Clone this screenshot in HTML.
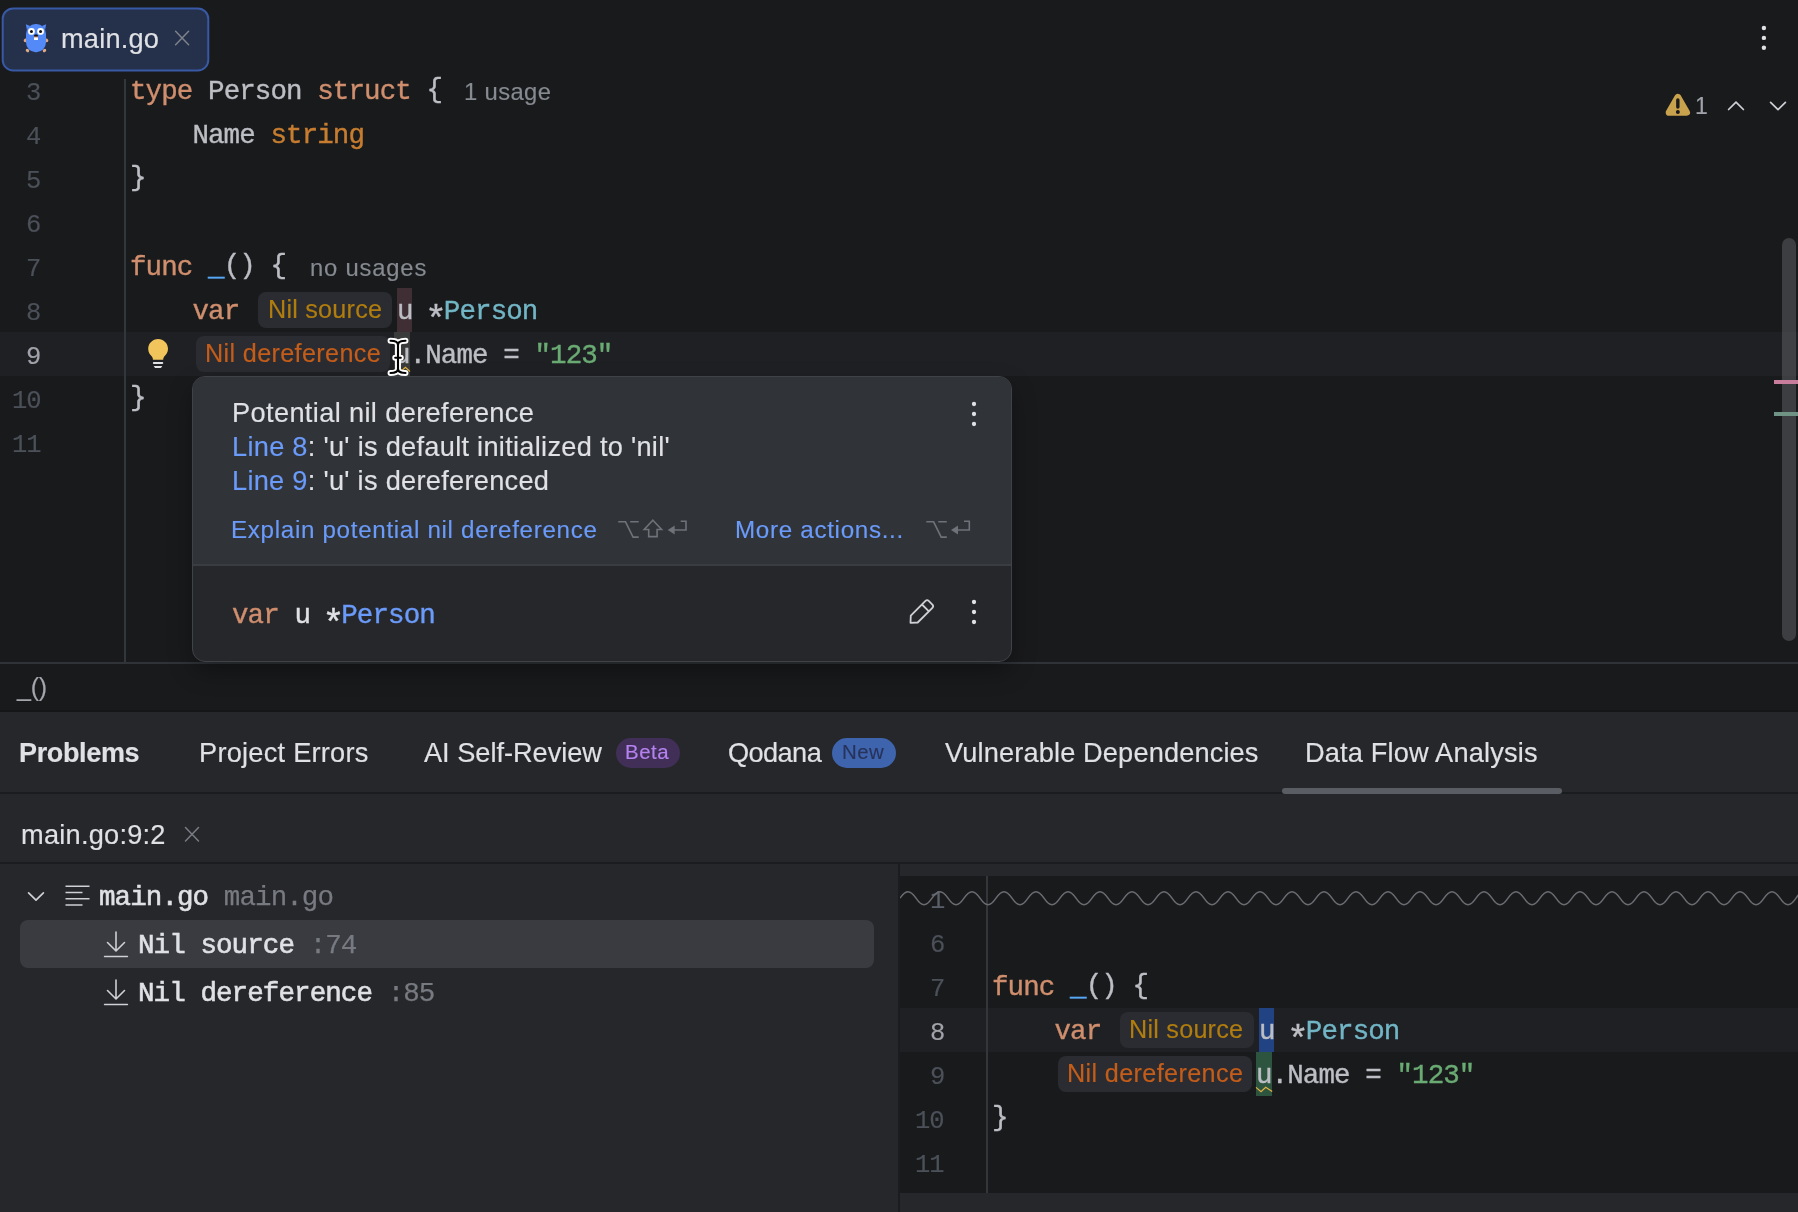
<!DOCTYPE html>
<html><head><meta charset="utf-8"><title>main.go</title>
<style>
*{box-sizing:border-box;margin:0;padding:0}
html,body{width:1798px;height:1212px;overflow:hidden;background:#191a1c}
body{position:relative;font-family:"Liberation Sans",sans-serif;color:#bcbec4}
.abs{position:absolute}
.ui{font-family:"Liberation Sans",sans-serif;white-space:pre;position:absolute;line-height:1;will-change:transform;-webkit-text-stroke:0.15px currentColor}
.mono{font-family:"Liberation Mono",monospace;white-space:pre;position:absolute;line-height:1;color:#bcbec4;-webkit-text-stroke:0.4px currentColor;will-change:transform}
.tree{-webkit-text-stroke:0.6px currentColor;color:#dfe1e5}
.kw{color:#cf8e6d}.ty{color:#c77d30}.tl{color:#72b6c6}.bl{color:#56a8f5}.st{color:#6aab73}.lk{color:#6b9bfa}.gr{color:#777a80;-webkit-text-stroke:0.25px currentColor}
.as{display:inline-block;width:21.900px;margin:0 -3.150px;letter-spacing:0;text-align:center;position:relative;top:12px;font-size:36.500px;line-height:0}
.br{position:relative;top:-2.400px}
.chip{position:absolute;background:#2a2c31;border-radius:8px}
</style></head><body>

<svg class="abs" style="left:0;top:0" width="216" height="80" viewBox="0 0 216 80"><rect x="2.700" y="8.400" width="205.600" height="62" rx="10.400" fill="#25304b" stroke="#3859a5" stroke-width="2"/></svg>
<svg class="abs" style="left:20px;top:20px" width="32" height="36" viewBox="20 20 32 36">
<path d="M25.900 24.300l4.200 1.800-3.300 3.300z" fill="#548af7"/><path d="M46.100 24.300l-4.200 1.800 3.300 3.300z" fill="#548af7"/>
<ellipse cx="25.800" cy="40.200" rx="2.300" ry="1.700" transform="rotate(-35 25.800 40.200)" fill="#e0aa84"/>
<ellipse cx="46.200" cy="40.200" rx="2.300" ry="1.700" transform="rotate(35 46.200 40.200)" fill="#e0aa84"/>
<ellipse cx="27.500" cy="50.500" rx="1.900" ry="1.500" transform="rotate(40 27.500 50.500)" fill="#e0aa84"/>
<ellipse cx="44.500" cy="50.500" rx="1.900" ry="1.500" transform="rotate(-40 44.500 50.500)" fill="#e0aa84"/>
<rect x="26" y="24" width="20" height="28.200" rx="9.500" ry="10" fill="#548af7"/>
<circle cx="31.450" cy="31.400" r="3.400" fill="#fff"/><circle cx="40.550" cy="31.400" r="3.400" fill="#fff"/>
<circle cx="31.450" cy="31.400" r="1.500" fill="#111"/><circle cx="40.550" cy="31.400" r="1.500" fill="#111"/>
<ellipse cx="36" cy="35.700" rx="2.100" ry="1.500" fill="#1a1210"/>
<rect x="34.100" y="36.600" width="3.800" height="1.400" fill="#e8b08a"/>
<rect x="34" y="37.700" width="4" height="2.300" fill="#fff"/>
</svg>
<svg class="abs" style="left:172px;top:28px" width="20" height="20" viewBox="172 28 20 20"><path d="M175.600 31.300l13 13.400M188.600 31.300l-13 13.400" stroke="#7e828a" stroke-width="1.500" stroke-linecap="round"/></svg>
<div class="abs" style="left:0;top:332px;width:1798px;height:44px;background:#1f2024"></div>
<div class="abs" style="left:124px;top:79px;width:2px;height:583px;background:#33363b"></div>
<div class="mono" style="right:1757.90px;top:80.67px;font-size:25.5px;letter-spacing:-1.000px;color:#4b5059;-webkit-text-stroke:0.15px currentColor">3</div>
<div class="mono" style="right:1757.90px;top:124.67px;font-size:25.5px;letter-spacing:-1.000px;color:#4b5059;-webkit-text-stroke:0.15px currentColor">4</div>
<div class="mono" style="right:1757.90px;top:168.67px;font-size:25.5px;letter-spacing:-1.000px;color:#4b5059;-webkit-text-stroke:0.15px currentColor">5</div>
<div class="mono" style="right:1757.90px;top:212.67px;font-size:25.5px;letter-spacing:-1.000px;color:#4b5059;-webkit-text-stroke:0.15px currentColor">6</div>
<div class="mono" style="right:1757.90px;top:256.67px;font-size:25.5px;letter-spacing:-1.000px;color:#4b5059;-webkit-text-stroke:0.15px currentColor">7</div>
<div class="mono" style="right:1757.90px;top:300.67px;font-size:25.5px;letter-spacing:-1.000px;color:#4b5059;-webkit-text-stroke:0.15px currentColor">8</div>
<div class="mono" style="right:1757.90px;top:344.67px;font-size:25.5px;letter-spacing:-1.000px;color:#a1a3ab;-webkit-text-stroke:0.15px currentColor">9</div>
<div class="mono" style="right:1757.90px;top:388.67px;font-size:25.5px;letter-spacing:-1.000px;color:#4b5059;-webkit-text-stroke:0.15px currentColor">10</div>
<div class="mono" style="right:1757.90px;top:432.67px;font-size:25.5px;letter-spacing:-1.000px;color:#4b5059;-webkit-text-stroke:0.15px currentColor">11</div>
<div class="mono" style="left:130.00px;top:78.15px;font-size:27.5px;letter-spacing:-0.900px;"><span class="kw">type</span> Person <span class="kw">struct</span> <span class="br">{</span></div>
<div class="mono" style="left:130.00px;top:122.15px;font-size:27.5px;letter-spacing:-0.900px;">    Name <span class="ty">string</span></div>
<div class="mono" style="left:130.00px;top:166.15px;font-size:27.5px;letter-spacing:-0.900px;"><span class="br">}</span></div>
<div class="mono" style="left:130.00px;top:254.15px;font-size:27.5px;letter-spacing:-0.900px;"><span class="kw">func</span> <span class="bl">_</span><span class="br">()</span> <span class="br">{</span></div>
<div class="mono" style="left:130.00px;top:298.15px;font-size:27.5px;letter-spacing:-0.900px;">    <span class="kw">var</span></div>
<div class="abs" style="left:397px;top:288px;width:15.300px;height:44px;background:#3f2e33"></div>
<div class="mono" style="left:397.00px;top:298.15px;font-size:27.5px;letter-spacing:-0.900px;">u <span class="as">*</span><span class="tl">Person</span></div>
<div class="abs" style="left:394px;top:332px;width:16px;height:44px;background:#393c3b"></div>
<div class="mono" style="left:394.00px;top:342.15px;font-size:27.5px;letter-spacing:-0.900px;">u.Name = <span class="st">"123"</span></div>
<div class="mono" style="left:130.00px;top:386.15px;font-size:27.5px;letter-spacing:-0.900px;"><span class="br">}</span></div>
<div class="chip" style="left:258px;top:292px;width:134px;height:36px"></div>
<div class="chip" style="left:196px;top:336px;width:194px;height:36px"></div>
<svg class="abs" style="left:390px;top:362px" width="24" height="14" viewBox="390 362 24 14"><path d="M400.700 371.800l4.700-4.500 4.600 4.200" fill="none" stroke="#e3b341" stroke-width="1.200"/></svg>
<svg class="abs" style="left:144px;top:336px" width="28" height="36" viewBox="144 336 28 36">
<path d="M158.100 338.900C152.600 338.900 148.200 343.300 148.200 348.800C148.200 352.300 150 354.600 151.400 356.100C152.400 357.200 152.900 358.200 152.900 359.800H163.200C163.200 358.200 163.700 357.200 164.700 356.100C166.100 354.600 168 352.300 168 348.800C168 343.300 163.600 338.900 158.100 338.900Z" fill="#f2c55c"/>
<rect x="152.900" y="362" width="10.300" height="2.100" rx="0.800" fill="#dfe1e5"/>
<path d="M153.700 366h8.600l-1.400 2h-5.800z" fill="#dfe1e5"/>
</svg>
<svg class="abs" style="left:1754px;top:22px" width="20" height="32" viewBox="1754 22 20 32"><circle cx="1763.900" cy="28" r="2.200" fill="#dfe1e5"/><circle cx="1763.900" cy="37.900" r="2.200" fill="#dfe1e5"/><circle cx="1763.900" cy="47.800" r="2.200" fill="#dfe1e5"/></svg>
<svg class="abs" style="left:1662px;top:90px" width="32" height="30" viewBox="1662 90 32 30">
<path d="M1677.850 97.300L1686.600 112.400H1669.100Z" fill="#c9a24e" stroke="#c9a24e" stroke-width="6.800" stroke-linejoin="round"/>
<rect x="1676.150" y="98.300" width="3.400" height="10.400" rx="1.700" fill="#191a1c"/><circle cx="1677.850" cy="112" r="2" fill="#191a1c"/></svg>
<svg class="abs" style="left:1724px;top:96px" width="24" height="20" viewBox="1724 96 24 20"><path d="M1728.600 109.500l7.400-7.400 7.400 7.400" fill="none" stroke="#ced0d6" stroke-width="1.700" stroke-linecap="round" stroke-linejoin="round"/></svg>
<svg class="abs" style="left:1766px;top:96px" width="24" height="20" viewBox="1766 96 24 20"><path d="M1770.600 102.300l7.400 7.400 7.400-7.400" fill="none" stroke="#ced0d6" stroke-width="1.700" stroke-linecap="round" stroke-linejoin="round"/></svg>
<div class="abs" style="left:1782px;top:238px;width:14px;height:403px;border-radius:7px;background:rgba(90,92,96,0.55)"></div>
<div class="abs" style="left:1774px;top:380px;width:24px;height:4px;background:#c97d9c"></div>
<div class="abs" style="left:1774px;top:412px;width:24px;height:4px;background:#6f9384"></div>
<div class="abs" style="left:0;top:662px;width:1798px;height:2px;background:#303338"></div>
<div class="abs" style="left:0;top:710px;width:1798px;height:2px;background:#151618"></div>
<div class="abs" style="left:192px;top:375.500px;width:820px;height:286px;border-radius:13px;background:#26272b;border:1.500px solid #3f4247;overflow:hidden;box-shadow:0 10px 24px -2px rgba(0,0,0,0.36)">
  <div class="abs" style="left:0;top:0;width:100%;height:187.500px;background:#303338"></div>
  <div class="abs" style="left:0;top:187.500px;width:100%;height:2px;background:#3a3d42"></div>
</div>
<svg class="abs" style="left:963px;top:396.0px" width="20" height="40" viewBox="963 396.0 20 40"><circle cx="974" cy="404.0" r="2.150" fill="#dfe1e5"/><circle cx="974" cy="414.0" r="2.150" fill="#dfe1e5"/><circle cx="974" cy="424.0" r="2.150" fill="#dfe1e5"/></svg>
<svg class="abs" style="left:963px;top:594.0px" width="20" height="40" viewBox="963 594.0 20 40"><circle cx="974" cy="602.0" r="2.150" fill="#dfe1e5"/><circle cx="974" cy="612.0" r="2.150" fill="#dfe1e5"/><circle cx="974" cy="622.0" r="2.150" fill="#dfe1e5"/></svg>
<svg class="abs" style="left:904px;top:594px" width="36" height="34" viewBox="904 594 36 34"><path d="M910.500 622.800l.3-7.200 14.700-14.700a2.300 2.300 0 0 1 3.200 0l3.700 3.700a2.300 2.300 0 0 1 0 3.200l-14.700 14.700zM922 604.500l6.900 6.900" fill="none" stroke="#ced0d6" stroke-width="1.800" stroke-linejoin="round" stroke-linecap="round"/></svg>
<svg class="abs" style="left:610px;top:512px" width="370" height="32" viewBox="610 512 370 32"><path d="M618.2 521.800h7.300l7.600 15.300h5.600M630.2 521.800h8.500" fill="none" stroke="#6f7278" stroke-width="1.600"/><path d="M652.9000000000001 520.200l8.700 9.300h-4.500v7.100h-8.400v-7.100h-4.500z" fill="none" stroke="#6f7278" stroke-width="1.600" stroke-linejoin="miter"/><path d="M686.0 521.300h-5.300M686.0 520.500v9.500h-12" fill="none" stroke="#6f7278" stroke-width="1.600"/><path d="M667.7 530l7-4.600v9.200z" fill="#6f7278"/><path d="M926.3 521.800h7.300l7.600 15.300h5.600M938.3 521.800h8.500" fill="none" stroke="#6f7278" stroke-width="1.600"/><path d="M969.3 521.300h-5.300M969.3 520.500v9.500h-12" fill="none" stroke="#6f7278" stroke-width="1.600"/><path d="M951.0 530l7-4.600v9.200z" fill="#6f7278"/></svg>
<div class="mono" style="left:232.00px;top:602.20px;font-size:27.5px;letter-spacing:-0.900px;color:#dfe1e5;"><span class="kw">var</span> u <span class="as">*</span><span class="lk">Person</span></div>
<svg class="abs" style="left:384px;top:334px" width="28" height="46" viewBox="384 334 28 46">
<g fill="none" stroke-linecap="round" stroke-linejoin="round">
<path id="ib" d="M390.500 340.800c4 0 7.500 1.200 7.500 4.200c0-3 3.500-4.200 7.500-4.200M398 345v24.700M390.500 373c4 0 7.500-1.200 7.500-4.200c0 3 3.500 4.200 7.500 4.200M395.200 357.800h5.600" stroke="#fff" stroke-width="5.900"/>
<path d="M390.500 340.800c4 0 7.500 1.200 7.500 4.200c0-3 3.500-4.200 7.500-4.200M398 345v24.700M390.500 373c4 0 7.500-1.200 7.500-4.200c0 3 3.500 4.200 7.500 4.200M395.200 357.800h5.600" stroke="#000" stroke-width="2.100"/>
</g></svg>
<div class="abs" style="left:0;top:712px;width:1798px;height:500px;background:#26272b"></div>
<div class="abs" style="left:0;top:792.300px;width:1798px;height:2px;background:#1b1c1f"></div>
<div class="abs" style="left:0;top:862.300px;width:1798px;height:2px;background:#1b1c1f"></div>
<div class="abs" style="left:615.800px;top:737.800px;width:64.200px;height:30px;border-radius:15px;background:#412f58"></div>
<div class="abs" style="left:832px;top:737.800px;width:64.200px;height:30px;border-radius:15px;background:#3f64ae"></div>
<div class="abs" style="left:1282px;top:788px;width:280px;height:6px;border-radius:3px;background:#5a5d63"></div>
<svg class="abs" style="left:182px;top:824px" width="20" height="20" viewBox="182 824 20 20"><path d="M185.500 827.600l13 13.400M198.500 827.600l-13 13.400" stroke="#7a7d85" stroke-width="1.500" stroke-linecap="round"/></svg>
<div class="abs" style="left:20px;top:920px;width:854px;height:48px;border-radius:8px;background:#393b40"></div>
<svg class="abs" style="left:24px;top:886px" width="24" height="20" viewBox="24 886 24 20"><path d="M28.600 892.800l7.400 7.400 7.400-7.400" fill="none" stroke="#ced0d6" stroke-width="1.700" stroke-linecap="round" stroke-linejoin="round"/></svg>
<svg class="abs" style="left:62px;top:882px" width="32" height="28" viewBox="62 882 32 28"><path d="M65.500 886.300h24M65.500 892.500h17M65.500 898.800h24M65.500 905h17" stroke="#ced0d6" stroke-width="1.600"/></svg>
<div class="mono tree" style="left:99.00px;top:884.40px;font-size:27.5px;letter-spacing:-0.900px;">main.go <span class="gr">main.go</span></div>
<svg class="abs" style="left:100px;top:926px" width="32" height="36" viewBox="100 926 32 36"><path d="M116 932v18.500M107.500 942.5l8.500 8.500 8.500-8.500M104.600 956.5h22.800" fill="none" stroke="#ced0d6" stroke-width="1.600" stroke-linecap="round" stroke-linejoin="round"/></svg>
<svg class="abs" style="left:100px;top:974px" width="32" height="36" viewBox="100 974 32 36"><path d="M116 980v18.500M107.500 990.5l8.500 8.500 8.500-8.500M104.600 1004.5h22.800" fill="none" stroke="#ced0d6" stroke-width="1.600" stroke-linecap="round" stroke-linejoin="round"/></svg>
<div class="mono tree" style="left:138.00px;top:932.10px;font-size:27.5px;letter-spacing:-0.900px;">Nil source <span class="gr">:74</span></div>
<div class="mono tree" style="left:138.00px;top:980.10px;font-size:27.5px;letter-spacing:-0.900px;">Nil dereference <span class="gr">:85</span></div>
<div class="abs" style="left:898.300px;top:864px;width:2px;height:348px;background:#1b1c1f"></div>
<div class="abs" style="left:900px;top:876px;width:898px;height:317px;background:#191a1c"></div>
<div class="abs" style="left:900px;top:1008px;width:898px;height:44px;background:#1f2024"></div>
<div class="abs" style="left:986px;top:876px;width:2px;height:317px;background:#33363b"></div>
<div class="mono" style="right:854.10px;top:888.82px;font-size:25.5px;letter-spacing:-1.000px;color:#5a5f6b;-webkit-text-stroke:0.15px currentColor">1</div>
<div class="mono" style="right:854.10px;top:932.67px;font-size:25.5px;letter-spacing:-1.000px;color:#4b5059;-webkit-text-stroke:0.15px currentColor">6</div>
<div class="mono" style="right:854.10px;top:976.67px;font-size:25.5px;letter-spacing:-1.000px;color:#4b5059;-webkit-text-stroke:0.15px currentColor">7</div>
<div class="mono" style="right:854.10px;top:1020.67px;font-size:25.5px;letter-spacing:-1.000px;color:#a1a3ab;-webkit-text-stroke:0.15px currentColor">8</div>
<div class="mono" style="right:854.10px;top:1064.67px;font-size:25.5px;letter-spacing:-1.000px;color:#4b5059;-webkit-text-stroke:0.15px currentColor">9</div>
<div class="mono" style="right:854.10px;top:1108.67px;font-size:25.5px;letter-spacing:-1.000px;color:#4b5059;-webkit-text-stroke:0.15px currentColor">10</div>
<div class="mono" style="right:854.10px;top:1152.67px;font-size:25.5px;letter-spacing:-1.000px;color:#4b5059;-webkit-text-stroke:0.15px currentColor">11</div>
<svg class="abs" style="left:900px;top:886px" width="898" height="24" viewBox="900 886 898 24"><path d="M900 898.200C905.8 889.5 910.2 889.5 916 898.200C921.8 906.9 926.2 906.9 932 898.200C937.8 889.5 942.2 889.5 948 898.200C953.8 906.9 958.2 906.9 964 898.200C969.8 889.5 974.2 889.5 980 898.200C985.8 906.9 990.2 906.9 996 898.200C1001.8 889.5 1006.2 889.5 1012 898.200C1017.8 906.9 1022.2 906.9 1028 898.200C1033.8 889.5 1038.2 889.5 1044 898.200C1049.8 906.9 1054.2 906.9 1060 898.200C1065.8 889.5 1070.2 889.5 1076 898.200C1081.8 906.9 1086.2 906.9 1092 898.200C1097.8 889.5 1102.2 889.5 1108 898.200C1113.8 906.9 1118.2 906.9 1124 898.200C1129.8 889.5 1134.2 889.5 1140 898.200C1145.8 906.9 1150.2 906.9 1156 898.200C1161.8 889.5 1166.2 889.5 1172 898.200C1177.8 906.9 1182.2 906.9 1188 898.200C1193.8 889.5 1198.2 889.5 1204 898.200C1209.8 906.9 1214.2 906.9 1220 898.200C1225.8 889.5 1230.2 889.5 1236 898.200C1241.8 906.9 1246.2 906.9 1252 898.200C1257.8 889.5 1262.2 889.5 1268 898.200C1273.8 906.9 1278.2 906.9 1284 898.200C1289.8 889.5 1294.2 889.5 1300 898.200C1305.8 906.9 1310.2 906.9 1316 898.200C1321.8 889.5 1326.2 889.5 1332 898.200C1337.8 906.9 1342.2 906.9 1348 898.200C1353.8 889.5 1358.2 889.5 1364 898.200C1369.8 906.9 1374.2 906.9 1380 898.200C1385.8 889.5 1390.2 889.5 1396 898.200C1401.8 906.9 1406.2 906.9 1412 898.200C1417.8 889.5 1422.2 889.5 1428 898.200C1433.8 906.9 1438.2 906.9 1444 898.200C1449.8 889.5 1454.2 889.5 1460 898.200C1465.8 906.9 1470.2 906.9 1476 898.200C1481.8 889.5 1486.2 889.5 1492 898.200C1497.8 906.9 1502.2 906.9 1508 898.200C1513.8 889.5 1518.2 889.5 1524 898.200C1529.8 906.9 1534.2 906.9 1540 898.200C1545.8 889.5 1550.2 889.5 1556 898.200C1561.8 906.9 1566.2 906.9 1572 898.200C1577.8 889.5 1582.2 889.5 1588 898.200C1593.8 906.9 1598.2 906.9 1604 898.200C1609.8 889.5 1614.2 889.5 1620 898.200C1625.8 906.9 1630.2 906.9 1636 898.200C1641.8 889.5 1646.2 889.5 1652 898.200C1657.8 906.9 1662.2 906.9 1668 898.200C1673.8 889.5 1678.2 889.5 1684 898.200C1689.8 906.9 1694.2 906.9 1700 898.200C1705.8 889.5 1710.2 889.5 1716 898.200C1721.8 906.9 1726.2 906.9 1732 898.200C1737.8 889.5 1742.2 889.5 1748 898.200C1753.8 906.9 1758.2 906.9 1764 898.200C1769.8 889.5 1774.2 889.5 1780 898.200C1785.8 906.9 1790.2 906.9 1796 898.200C1801.8 889.5 1806.2 889.5 1812 898.200" fill="none" stroke="#696b70" stroke-width="1.500"/></svg>
<div class="mono" style="left:992.00px;top:974.15px;font-size:27.5px;letter-spacing:-0.900px;"><span class="kw">func</span> <span class="bl">_</span><span class="br">()</span> <span class="br">{</span></div>
<div class="mono" style="left:992.00px;top:1018.15px;font-size:27.5px;letter-spacing:-0.900px;">    <span class="kw">var</span></div>
<div class="chip" style="left:1120px;top:1012px;width:134.300px;height:36px"></div>
<div class="abs" style="left:1259px;top:1008px;width:15px;height:44px;background:#214283"></div>
<div class="mono" style="left:1259.00px;top:1018.15px;font-size:27.5px;letter-spacing:-0.900px;">u <span class="as">*</span><span class="tl">Person</span></div>
<div class="chip" style="left:1058px;top:1056px;width:194px;height:36px"></div>
<div class="abs" style="left:1256px;top:1052px;width:16.400px;height:44px;background:#2d543f"></div>
<div class="mono" style="left:1256.40px;top:1062.15px;font-size:27.5px;letter-spacing:-0.900px;">u.Name = <span class="st">"123"</span></div>
<svg class="abs" style="left:1252px;top:1082px" width="24" height="14" viewBox="1252 1082 24 14"><path d="M1256 1087.400l5 4.400 4.700-4.600 6.500 4.400" fill="none" stroke="#e3b341" stroke-width="1.200"/></svg>
<div class="mono" style="left:992.00px;top:1106.15px;font-size:27.5px;letter-spacing:-0.900px;"><span class="br">}</span></div>
<div class="ui" style="left:61.10px;top:25.28px;font-size:27.2px;font-weight:normal;letter-spacing:0.200px;color:#dfe1e5">main.go</div>
<div class="ui" style="left:464.30px;top:80.12px;font-size:23.8px;font-weight:normal;letter-spacing:0.367px;color:#868a91">1 usage</div>
<div class="ui" style="left:309.50px;top:256.12px;font-size:23.8px;font-weight:normal;letter-spacing:0.812px;color:#868a91">no usages</div>
<div class="ui" style="left:267.60px;top:297.18px;font-size:25.2px;font-weight:normal;letter-spacing:0.222px;color:#b07d0e">Nil source</div>
<div class="ui" style="left:205.30px;top:341.28px;font-size:25.2px;font-weight:normal;letter-spacing:0.350px;color:#c45d1a">Nil dereference</div>
<div class="ui" style="left:1695.00px;top:94.95px;font-size:23.0px;font-weight:normal;letter-spacing:0.000px;color:#a0a3aa">1</div>
<div class="ui" style="left:231.50px;top:399.08px;font-size:27.2px;font-weight:normal;letter-spacing:0.363px;color:#dfe1e5">Potential nil dereference</div>
<div class="ui" style="left:231.50px;top:432.98px;font-size:27.2px;font-weight:normal;letter-spacing:0.283px;color:#dfe1e5"><span class=lk>Line 8</span>: 'u' is default initialized to 'nil'</div>
<div class="ui" style="left:231.50px;top:466.88px;font-size:27.2px;font-weight:normal;letter-spacing:0.281px;color:#dfe1e5"><span class=lk>Line 9</span>: 'u' is dereferenced</div>
<div class="ui" style="left:231.30px;top:517.53px;font-size:24.2px;font-weight:normal;letter-spacing:0.678px;color:#6b9bfa">Explain potential nil dereference</div>
<div class="ui" style="left:735.40px;top:517.53px;font-size:24.2px;font-weight:normal;letter-spacing:0.686px;color:#6b9bfa">More actions...</div>
<div class="ui" style="left:16.70px;top:675.15px;font-size:25.0px;font-weight:normal;letter-spacing:-0.200px;color:#a4a6ad">_()</div>
<div class="ui" style="left:18.50px;top:739.65px;font-size:27.0px;font-weight:bold;letter-spacing:-0.357px;color:#dfe1e5">Problems</div>
<div class="ui" style="left:198.80px;top:739.48px;font-size:27.2px;font-weight:normal;letter-spacing:0.246px;color:#dfe1e5">Project Errors</div>
<div class="ui" style="left:424.40px;top:739.48px;font-size:27.2px;font-weight:normal;letter-spacing:-0.023px;color:#dfe1e5">AI Self-Review</div>
<div class="ui" style="left:625.00px;top:742.46px;font-size:20.4px;font-weight:normal;letter-spacing:0.567px;color:#b583f0">Beta</div>
<div class="ui" style="left:728.20px;top:739.18px;font-size:27.2px;font-weight:normal;letter-spacing:-0.600px;color:#dfe1e5">Qodana</div>
<div class="ui" style="left:841.60px;top:742.46px;font-size:20.4px;font-weight:normal;letter-spacing:0.500px;color:#27335a">New</div>
<div class="ui" style="left:945.00px;top:739.48px;font-size:27.2px;font-weight:normal;letter-spacing:0.141px;color:#dfe1e5">Vulnerable Dependencies</div>
<div class="ui" style="left:1305.10px;top:739.48px;font-size:27.2px;font-weight:normal;letter-spacing:0.165px;color:#dfe1e5">Data Flow Analysis</div>
<div class="ui" style="left:20.80px;top:820.98px;font-size:27.2px;font-weight:normal;letter-spacing:0.240px;color:#dfe1e5">main.go:9:2</div>
<div class="ui" style="left:1129.40px;top:1017.08px;font-size:25.2px;font-weight:normal;letter-spacing:0.233px;color:#b07d0e">Nil source</div>
<div class="ui" style="left:1067.40px;top:1060.98px;font-size:25.2px;font-weight:normal;letter-spacing:0.364px;color:#c45d1a">Nil dereference</div>
</body></html>
